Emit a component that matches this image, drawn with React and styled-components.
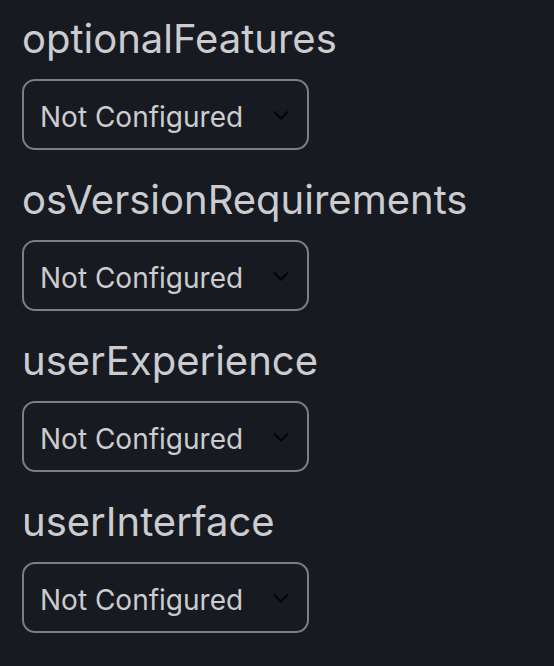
import React from "react";
import styled, { createGlobalStyle } from "styled-components";

const Global = createGlobalStyle`
  html, body { margin: 0; padding: 0; background: #171a21; }
  body { font-family: Inter, "Noto Sans", sans-serif; }
`;

const Page = styled.div`
  display: flex;
  flex-direction: column;
  padding: 17px 0 0 22px;
  gap: 28px;
`;

const Field = styled.div`
  display: flex;
  flex-direction: column;
  gap: 18px;
`;

const Label = styled.div`
  color: #cbccd0;
  font-size: 40px;
  line-height: 44px;
`;

const SelectBox = styled.div`
  box-sizing: border-box;
  width: 287px;
  height: 71px;
  border: 2px solid #7d7e82;
  border-radius: 13px;
  display: flex;
  align-items: center;
  justify-content: space-between;
  padding: 4px 18px 0 16px;
  color: #cbccd0;
  font-size: 28px;
`;

const Chevron = styled.svg`
  margin-top: -4px;
  flex: none;
`;

const ChevronIcon = () => (
  <Chevron width="16" height="10" viewBox="0 0 16 10" fill="none">
    <path d="M1 1.5 L8 8.5 L15 1.5" stroke="#050507" strokeWidth="2.2" />
  </Chevron>
);

const fields = ["optionalFeatures", "osVersionRequirements", "userExperience", "userInterface"];

export default function App() {
  return (
    <>
      <Global />
      <Page>
        {fields.map((f) => (
          <Field key={f}>
            <Label>{f}</Label>
            <SelectBox>
              <span>Not Configured</span>
              <ChevronIcon />
            </SelectBox>
          </Field>
        ))}
      </Page>
    </>
  );
}
